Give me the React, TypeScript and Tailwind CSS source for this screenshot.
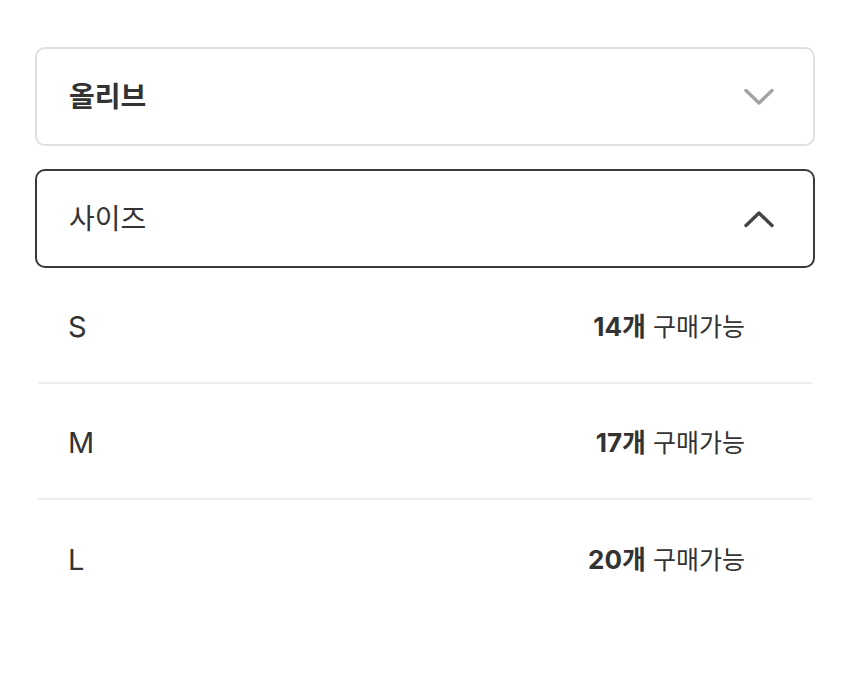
const sizes = [
  { label: "S", stock: 14 },
  { label: "M", stock: 17 },
  { label: "L", stock: 20 },
];

function Chevron({ up, className }: { up?: boolean; className?: string }) {
  return (
    <svg width="30" height="18" viewBox="0 0 30 18" fill="none" className={className}>
      <path
        d={up ? "M2 15.5 L15 3 L28 15.5" : "M2 2.5 L15 15 L28 2.5"}
        stroke="currentColor"
        strokeWidth="3.4"
        strokeLinecap="round"
        strokeLinejoin="round"
      />
    </svg>
  );
}

export default function App() {
  return (
    <div
      className="min-h-[683px] bg-white px-[35px] pt-[47px] text-[#333]"
      style={{ fontFamily: 'Inter, "Noto Sans CJK KR", sans-serif' }}
    >
      {/* 색상 선택 */}
      <button className="flex h-[99px] w-full items-center justify-between rounded-[10px] border-2 border-[#e0e0e0] pl-[32px] pr-[39px]">
        <span className="text-[28px] font-bold leading-none">올리브</span>
        <Chevron className="text-[#a3a3a3]" />
      </button>

      {/* 사이즈 선택 (열림) */}
      <button className="mt-[23px] flex h-[99px] w-full items-center justify-between rounded-[10px] border-2 border-[#3a3a3a] pl-[32px] pr-[39px]">
        <span className="text-[28px] leading-none">사이즈</span>
        <Chevron up className="text-[#444]" />
      </button>

      <ul className="px-[3px]">
        {sizes.map((s, i) => (
          <li
            key={s.label}
            className={`flex h-[116px] items-center justify-between pl-[30px] pr-[67px] pt-[3px] ${
              i < sizes.length - 1 ? "border-b-2 border-[#eeeeee]" : ""
            }`}
          >
            <span className="text-[29px] leading-none">{s.label}</span>
            <span className="text-[25px] leading-none">
              <span className="text-[26px] font-bold">{s.stock}개</span> 구매가능
            </span>
          </li>
        ))}
      </ul>
    </div>
  );
}
